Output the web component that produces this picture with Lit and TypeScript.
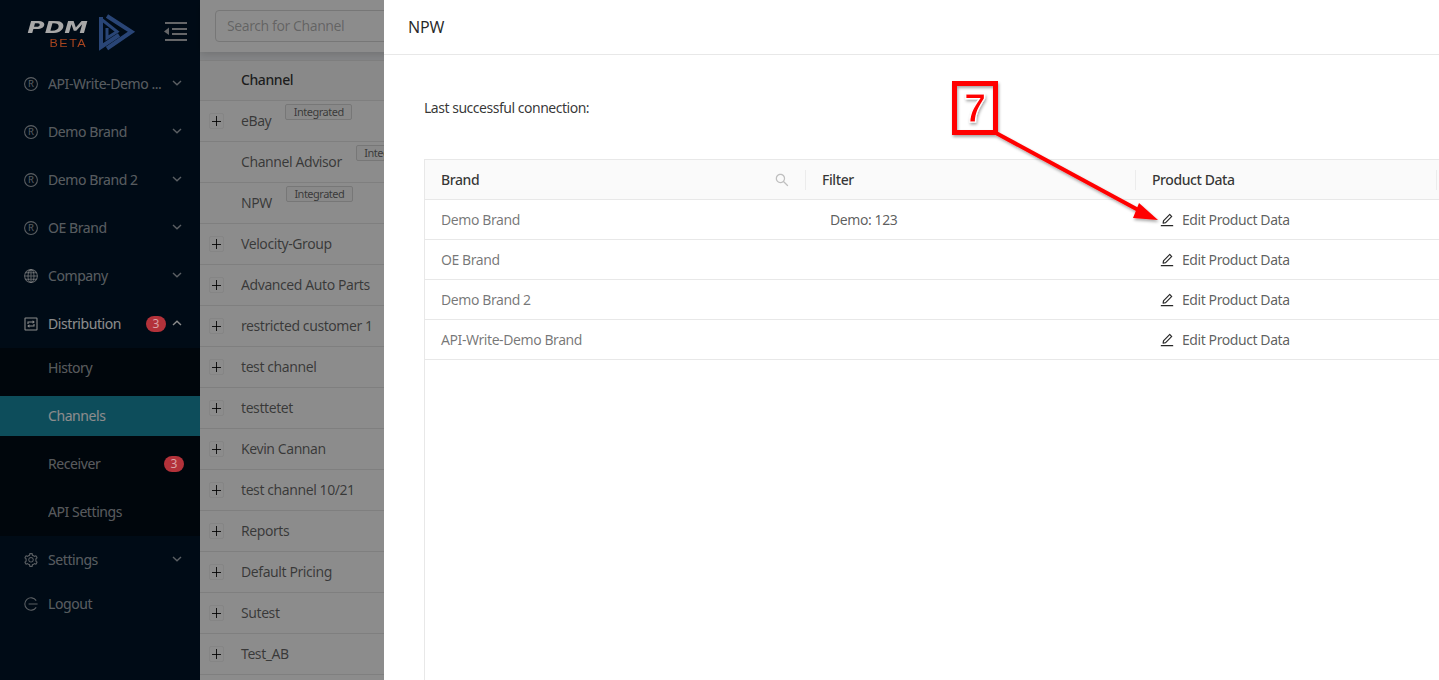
import { LitElement, html, css, svg } from "lit";
import { customElement } from "lit/decorators.js";

const EDIT = "M257.7 752c2 0 4-.2 6-.5L431.9 722c2-.4 3.9-1.3 5.3-2.8l423.9-423.9a9.96 9.96 0 0 0 0-14.1L694.9 114.9c-1.9-1.9-4.4-2.9-7.1-2.9s-5.2 1-7.1 2.9L256.8 538.8c-1.5 1.5-2.4 3.3-2.8 5.3l-29.5 168.2a33.5 33.5 0 0 0 9.4 29.8c6.6 6.4 14.9 9.9 23.8 9.9zm67.4-174.4L687.8 215l73.3 73.3-362.7 362.6-88.9 15.7 15.6-89zM880 836H144c-17.7 0-32 14.3-32 32v36c0 4.4 3.6 8 8 8h784c4.4 0 8-3.6 8-8v-36c0-17.7-14.3-32-32-32z";
const SEARCH = "M909.6 854.5L649.9 594.8C690.2 542.7 712 479 712 412c0-80.2-31.3-155.4-87.9-212.1-56.6-56.7-132-87.9-212.1-87.9s-155.5 31.3-212.1 87.9C143.2 256.5 112 331.8 112 412c0 80.1 31.3 155.5 87.9 212.1C256.5 680.8 331.8 712 412 712c67 0 130.6-21.8 182.7-62l259.7 259.6a8.2 8.2 0 0 0 11.6 0l43.6-43.5a8.2 8.2 0 0 0 0-11.6zM570.4 570.4C528 612.7 471.8 636 412 636s-116-23.3-158.4-65.6C211.3 528 188 471.8 188 412s23.3-116.1 65.6-158.4C296 211.3 352.2 188 412 188s116.1 23.2 158.4 65.6S636 352.2 636 412s-23.3 116.1-65.6 158.4z";
const GEAR = "M924.8 625.7l-65.5-56c3.1-19 4.7-38.4 4.7-57.8s-1.6-38.8-4.7-57.8l65.5-56a32.03 32.03 0 0 0 9.3-35.2l-.9-2.6a443.74 443.74 0 0 0-79.7-137.9l-1.8-2.1a32.12 32.12 0 0 0-35.1-9.5l-81.3 28.9c-30-24.6-63.5-44-99.7-57.6l-15.7-85a32.05 32.05 0 0 0-25.8-25.7l-2.7-.5c-52.1-9.4-106.9-9.4-159 0l-2.7.5a32.05 32.05 0 0 0-25.8 25.7l-15.8 85.4a351.86 351.86 0 0 0-99 57.4l-81.9-29.1a32 32 0 0 0-35.1 9.5l-1.8 2.1a446.02 446.02 0 0 0-79.7 137.9l-.9 2.6c-4.5 12.5-.8 26.5 9.3 35.2l66.3 56.6c-3.1 18.8-4.6 38-4.6 57.1 0 19.2 1.5 38.4 4.6 57.1L99 625.5a32.03 32.03 0 0 0-9.3 35.2l.9 2.6c18.1 50.4 44.9 96.9 79.7 137.9l1.8 2.1a32.12 32.12 0 0 0 35.1 9.5l81.9-29.1c29.8 24.5 63.1 43.9 99 57.4l15.8 85.4a32.05 32.05 0 0 0 25.8 25.7l2.7.5a449.4 449.4 0 0 0 159 0l2.7-.5a32.05 32.05 0 0 0 25.8-25.7l15.7-85a350 350 0 0 0 99.7-57.6l81.3 28.9a32 32 0 0 0 35.1-9.5l1.8-2.1c34.8-41.1 61.6-87.5 79.7-137.9l.9-2.6c4.5-12.3.8-26.3-9.3-35zM788.3 465.9c2.5 15.1 3.8 30.6 3.8 46.1s-1.3 31-3.8 46.1l-6.6 40.1 74.7 63.9a370.03 370.03 0 0 1-42.6 73.6L721 702.8l-31.4 25.8c-23.9 19.6-50.5 35-79.3 45.8l-38.1 14.3-17.9 97a377.5 377.5 0 0 1-85 0l-17.9-97.2-37.8-14.5c-28.5-10.8-55-26.2-78.7-45.7l-31.4-25.9-93.4 33.2c-17-22.9-31.2-47.6-42.6-73.6l75.5-64.5-6.5-40c-2.4-14.9-3.7-30.3-3.7-45.5 0-15.3 1.2-30.6 3.7-45.5l6.5-40-75.5-64.5c11.3-26.1 25.6-50.7 42.6-73.6l93.4 33.2 31.4-25.9c23.7-19.5 50.2-34.9 78.7-45.7l37.9-14.3 17.9-97.2c28.1-3.2 56.8-3.2 85 0l17.9 97 38.1 14.3c28.7 10.8 55.4 26.2 79.3 45.8l31.4 25.8 92.8-32.9c17 22.9 31.2 47.6 42.6 73.6L781.8 426l6.5 39.9zM512 326c-97.2 0-176 78.8-176 176s78.8 176 176 176 176-78.8 176-176-78.8-176-176-176zm79.2 255.2A111.6 111.6 0 0 1 512 614c-29.9 0-58-11.7-79.2-32.8A111.6 111.6 0 0 1 400 502c0-29.9 11.7-58 32.8-79.2C454 401.6 482.1 390 512 390c29.9 0 58 11.6 79.2 32.8A111.6 111.6 0 0 1 624 502c0 29.9-11.7 58-32.8 79.2z";

const antIcon = (d: string, cls: string) => html`<svg class=${cls} viewBox="64 64 896 896" fill="currentColor"><path d=${d}></path></svg>`;

const icons: Record<string, unknown> = {
  reg: svg`<circle cx="7" cy="7" r="6.4"/><text x="7" y="10.3" text-anchor="middle" font-size="9.5" fill="currentColor" stroke="none" style="letter-spacing:0">R</text>`,
  globe: svg`<circle cx="7" cy="7" r="6.4"/><ellipse cx="7" cy="7" rx="3" ry="6.4"/><path d="M7 .6v12.8M.6 7h12.8M1.5 3.8h11M1.5 10.2h11"/>`,
  dist: svg`<rect x="1" y="1" width="12" height="12" rx=".5"/><path d="M4 7V5h5"/><path d="M8.6 3.3 10.8 5 8.6 6.7z" fill="currentColor" stroke="none"/><path d="M10 7v2H5"/><path d="M5.4 7.3 3.2 9 5.4 10.7z" fill="currentColor" stroke="none"/>`,
  logout: svg`<path d="M12.2 3.6A6.2 6.2 0 1 0 12.2 10.4M4.6 7h9"/>`,
};

const menuIcon = (n: string) => html`<svg class="mi" viewBox="0 0 14 14" fill="none" stroke="currentColor" stroke-width="1.05">${icons[n]}</svg>`;
const chevron = (up = false) => html`<svg class="chev" viewBox="0 0 10 6" fill="none" stroke="currentColor" stroke-width="1.4"><path d=${up ? "M1 5 5 1.2 9 5" : "M1 1 5 4.8 9 1"}></path></svg>`;

const channels: [string, boolean, boolean][] = [
  ["eBay", true, true],
  ["Channel Advisor", false, true],
  ["NPW", false, true],
  ["Velocity-Group", true, false],
  ["Advanced Auto Parts", true, false],
  ["restricted customer 1", true, false],
  ["test channel", true, false],
  ["testtetet", true, false],
  ["Kevin Cannan", true, false],
  ["test channel 10/21", true, false],
  ["Reports", true, false],
  ["Default Pricing", true, false],
  ["Sutest", true, false],
  ["Test_AB", true, false],
  ["", false, false],
];

const brands: [string, string][] = [
  ["Demo Brand", "Demo: 123"],
  ["OE Brand", ""],
  ["Demo Brand 2", ""],
  ["API-Write-Demo Brand", ""],
];

@customElement("app-root")
export class AppRoot extends LitElement {
  static styles = css`
    :host { display: block; position: relative; width: 1439px; height: 680px; overflow: hidden; background: #f0f2f5;
      font-family: "Noto Sans", "Open Sans", sans-serif; font-size: 14px; letter-spacing: -0.42px; color: rgba(0,0,0,.6); }
    * { box-sizing: border-box; }
    .layout { display: flex; height: 680px; }
    .side { width: 200px; flex: none; background: #001529; color: rgba(255,255,255,.65); }
    .logo { height: 64px; display: flex; align-items: center; padding: 0 0 0 27px; }
    .wordmark { display: flex; flex-direction: column; align-items: flex-end; width: 62px; padding-top: 6px; position: relative; z-index: 2; }
    .pdm { font: italic 700 16px/14px "DejaVu Sans", sans-serif; letter-spacing: 0; color: #a8a8a8; transform: scaleX(1.48); transform-origin: right; margin-right: 1px; }
    .beta { font: 400 10px/10px "Liberation Sans", sans-serif; letter-spacing: 1.2px; color: #a8451f; margin-top: 3.4px; margin-right: 2px; transform: scaleX(1.25); transform-origin: right; }
    .mark { width: 40px; height: 40px; margin-left: 9px; flex: none; }
    .collapse { width: 23px; height: 20px; margin-left: 26px; flex: none; }
    .items { display: flex; flex-direction: column; }
    .item { height: 40px; margin-bottom: 8px; display: flex; align-items: center; padding: 0 16px 0 24px; }
    .item.last { margin-bottom: 4px; }
    .item.open { color: #fff; margin-bottom: 4px; }
    .mi { width: 14px; height: 14px; flex: none; margin-right: 10px; }
    .label { flex: 1; white-space: nowrap; overflow: hidden; padding-bottom: 2px; }
    .chev { width: 10px; height: 6px; flex: none; margin-top: -2px; margin-left: 4px; margin-right: 2px; }
    .badge { background: #b3323a; color: #d9a3a6; height: 16px; min-width: 20px; border-radius: 8px; font-size: 12px; line-height: 16px; text-align: center; letter-spacing: 0; flex: none; margin-right: 2px; position: relative; z-index: 2; }
    .sub { background: #000c17; padding: 0 0 4px; display: flex; flex-direction: column; margin-bottom: 4px; }
    .sub .item { padding-left: 48px; }
    .sub .item:last-child { margin-bottom: 0; }
    .sub .item.active { background: #198ca7; color: #fff; }
    .sub .badge { margin-right: 0; }

    .main { flex: 1; min-width: 0; }
    .bar { height: 52px; background: #fff; box-shadow: 0 2px 8px rgba(0,0,0,.15); padding: 10px 15px; position: relative; }
    .search { width: 300px; height: 32px; border: 1px solid #d9d9d9; border-radius: 4px; background: #fff; padding: 0 11px; line-height: 29px; color: rgba(0,0,0,.3); white-space: nowrap; }
    .ctable { margin-top: 8px; background: #fff; }
    .chead { height: 41px; background: #fafafa; border-top: 1px solid #e8e8e8; border-bottom: 1px solid #e8e8e8; padding-left: 41px; line-height: 37px; font-weight: 500; color: rgba(0,0,0,.8); }
    .crow { height: 41px; border-bottom: 1px solid #e8e8e8; display: flex; align-items: center; padding-left: 9px; white-space: nowrap; }
    .name { padding-bottom: 2px; }
    .plus { width: 15px; height: 16px; border: 1px solid #f2f2f2; border-radius: 2px; flex: none; position: relative; margin-right: 17px; background: #fff; color: rgba(0,0,0,.85); }
    .plus::before { content: ""; position: absolute; left: 2px; right: 2px; top: 6.5px; height: 1px; background: currentColor; }
    .plus::after { content: ""; position: absolute; top: 2px; bottom: 2px; left: 6px; width: 1px; background: currentColor; }
    .noplus { width: 32px; flex: none; }
    .tag { font-size: 11px; line-height: 14px; height: 16px; padding: 0 7.5px; border: 1px solid #d9d9d9; background: #fafafa; border-radius: 2px; margin: -18px 0 0 14px; flex: none; letter-spacing: -0.5px; }

    .scrim { position: absolute; left: 0; top: 0; width: 384px; height: 680px; background: rgba(0,0,0,.45); z-index: 1; }
    .drawer { position: absolute; left: 384px; top: 0; width: 1055px; height: 680px; background: #fff; z-index: 1; }
    .dhead { height: 55px; border-bottom: 1px solid #e8e8e8; padding: 0 24px; font-size: 16px; line-height: 54px; color: rgba(0,0,0,.85); letter-spacing: -0.15px; }
    .dbody { padding: 44px 0 0 40px; }
    .conn { height: 60px; line-height: 18px; color: rgba(0,0,0,.8); font-size: 14px; letter-spacing: -0.48px; }
    .btable { width: 1040px; border: 1px solid #e8e8e8; height: 600px; border-right: none; }
    .bhead, .brow { display: grid; grid-template-columns: 381px 330px 301px 1fr; }
    .bhead { height: 40px; background: #fafafa; border-bottom: 1px solid #e8e8e8; color: rgba(0,0,0,.8); font-weight: 500; align-items: center; }
    .th { padding: 0 16px; height: 40px; line-height: 40px; position: relative; display: flex; justify-content: space-between; align-items: center; }
    .th::after { content: ""; position: absolute; right: 0; top: 10px; height: 20px; width: 1px; background: #ececec; }
    .th .s { width: 14px; height: 14px; color: #bfbfbf; margin-right: 1px; }
    .brow { height: 40px; border-bottom: 1px solid #e8e8e8; align-items: center; color: rgba(0,0,0,.55); }
    .td { padding: 0 16px; white-space: nowrap; }
    .td.f { padding-left: 24px; color: rgba(0,0,0,.65); }
    .td.e { display: flex; align-items: center; padding-left: 24px; color: rgba(0,0,0,.65); }
    .pen { width: 14px; height: 14px; margin-right: 8px; color: rgba(0,0,0,.85); }
    .note { position: absolute; left: 0; top: 0; width: 1439px; height: 680px; pointer-events: none; z-index: 3; }
    .seven { font: 700 40px "Liberation Sans", sans-serif; letter-spacing: 0; }
  `;

  render() {
    return html`
      <div class="layout">
        <aside class="side">
          <div class="logo">
            <div class="wordmark"><span class="pdm">PDM</span><span class="beta">BETA</span></div>
            <svg class="mark" viewBox="0 0 40 40" fill="none" stroke="#4b7fd8" stroke-width="4" stroke-linejoin="miter">
              <path d="M3 5V35L21 23"/>
              <path d="M9 4 33.5 19.7 9 36.5"/>
              <path d="M3 7 19 19.7 9 26V16" stroke-width="3"/>
            </svg>
            <svg class="collapse" viewBox="0 0 23 20" fill="#b9bbbd">
              <rect x="1" y="0" width="22" height="2"/><rect x="8" y="6" width="15" height="2"/><rect x="8" y="11" width="15" height="2"/><rect x="1" y="17" width="22" height="2"/>
              <path d="M5 5.5V13L0 9.5z"/>
            </svg>
          </div>
          <nav class="items">
            ${["API-Write-Demo Brand", "Demo Brand", "Demo Brand 2", "OE Brand"].map((t) => html`<div class="item">${menuIcon("reg")}<span class="label">${t.startsWith("API") ? "API-Write-Demo ..." : t}</span>${chevron()}</div>`)}
            <div class="item">${menuIcon("globe")}<span class="label">Company</span>${chevron()}</div>
            <div class="item open">${menuIcon("dist")}<span class="label">Distribution</span><span class="badge">3</span>${chevron(true)}</div>
            <div class="sub">
              <div class="item"><span class="label">History</span></div>
              <div class="item active"><span class="label">Channels</span></div>
              <div class="item"><span class="label">Receiver</span><span class="badge">3</span></div>
              <div class="item"><span class="label">API Settings</span></div>
            </div>
            <div class="item last">${antIcon(GEAR, "mi")}<span class="label">Settings</span>${chevron()}</div>
            <div class="item">${menuIcon("logout")}<span class="label">Logout</span></div>
          </nav>
        </aside>
        <main class="main">
          <div class="bar"><div class="search">Search for Channel</div></div>
          <div class="ctable">
            <div class="chead">Channel</div>
            ${channels.map(([n, p, t]) => html`<div class="crow">${p ? html`<span class="plus"></span>` : html`<span class="noplus"></span>`}<span class="name">${n}</span>${t ? html`<span class="tag">Integrated</span>` : ""}</div>`)}
          </div>
        </main>
      </div>
      <div class="scrim"></div>
      <section class="drawer">
        <div class="dhead">NPW</div>
        <div class="dbody">
          <div class="conn">Last successful connection:</div>
          <div class="btable">
            <div class="bhead">
              <div class="th">Brand ${antIcon(SEARCH, "s")}</div>
              <div class="th">Filter</div>
              <div class="th">Product Data</div>
            </div>
            ${brands.map(([b, f]) => html`<div class="brow"><div class="td">${b}</div><div class="td f">${f}</div><div class="td e">${antIcon(EDIT, "pen")}Edit Product Data</div></div>`)}
          </div>
        </div>
      </section>
      <svg class="note" viewBox="0 0 1439 680">
        <defs><filter id="sh" x="-20%" y="-20%" width="140%" height="140%"><feDropShadow dx="1" dy="2" stdDeviation="1.5" flood-color="#000" flood-opacity=".35"/></filter></defs>
        <g filter="url(#sh)">
          <rect x="954.5" y="83.5" width="41" height="49" fill="none" stroke="#f00" stroke-width="5"/>
          <path d="M996 133 L1142 212" stroke="#f00" stroke-width="4" fill="none"/>
          <path d="M1158 220 L1133 218 L1139 203z" fill="#f00"/>
        </g>
        <text class="seven" x="964" y="122" fill="#f00" stroke="#fff" stroke-width="1.2" filter="url(#sh)">7</text>
      </svg>
    `;
  }
}
